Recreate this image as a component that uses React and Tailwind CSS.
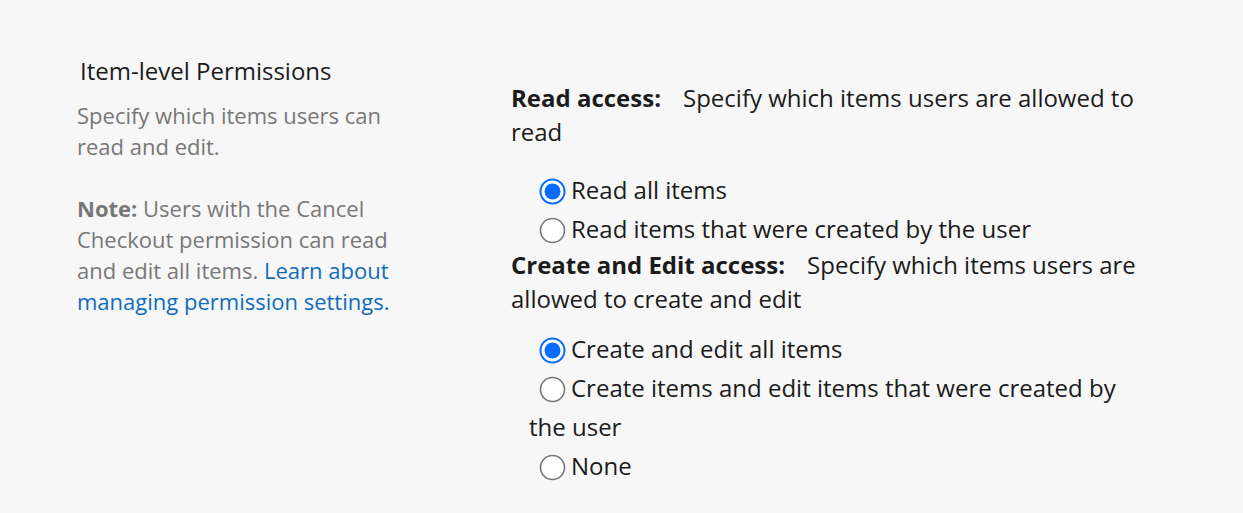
const Radio = ({ checked }) => (
  <svg width="27" height="27" viewBox="0 0 27 27" className="inline-block align-[-6px] mr-[5px] ml-[10px] shrink-0">
    {checked ? (
      <>
        <circle cx="13.5" cy="13.5" r="12" fill="#fff" stroke="#0a6cff" strokeWidth="2" />
        <circle cx="13.5" cy="13.5" r="8" fill="#0a6cff" />
      </>
    ) : (
      <circle cx="13.5" cy="13.5" r="12" fill="#fff" stroke="#767676" strokeWidth="1.6" />
    )}
  </svg>
);

const Option = ({ checked, children }) => (
  <div className="pl-[18px] leading-[39px]">
    <Radio checked={checked} />
    {children}
  </div>
);

export default function App() {
  return (
    <div className="min-h-[513px] w-full bg-[#f7f7f7] text-[#1b1b1b]" style={{ fontFamily: '"Open Sans", "Noto Sans", sans-serif' }}>
      <div className="flex pt-[54px]">
        <div className="w-[511px] shrink-0 pl-[77px]">
          <h2 className="pl-[3px] text-[24px] leading-[34px] text-[#1b1b1b]">Item-level Permissions</h2>
          <p className="mt-[12px] w-[320px] text-[22px] leading-[31px] text-[#777]">
            Specify which items users can read and edit.
          </p>
          <p className="mt-[31px] w-[320px] text-[22px] leading-[31px] text-[#777]">
            <span className="font-bold">Note:</span> Users with the Cancel Checkout permission can read and edit all items.{' '}
            <a href="#" className="text-[#0f6cbd]">Learn about managing permission settings.</a>
          </p>
        </div>
        <div className="w-[640px] pt-[27px] text-[24px]">
          <div className="leading-[34px]">
            <span className="font-bold">Read access:</span>
            <span className="ml-[22px]">Specify which items users are allowed to read</span>
          </div>
          <div className="mt-[21px]">
            <Option checked>Read all items</Option>
            <Option>Read items that were created by the user</Option>
          </div>
          <div className="leading-[34px]">
            <span className="font-bold">Create and Edit access:</span>
            <span className="ml-[22px]">Specify which items users are allowed to create and edit</span>
          </div>
          <div className="mt-[13px]">
            <Option checked>Create and edit all items</Option>
            <Option>Create items and edit items that were created by the user</Option>
            <Option>None</Option>
          </div>
        </div>
      </div>
    </div>
  );
}
